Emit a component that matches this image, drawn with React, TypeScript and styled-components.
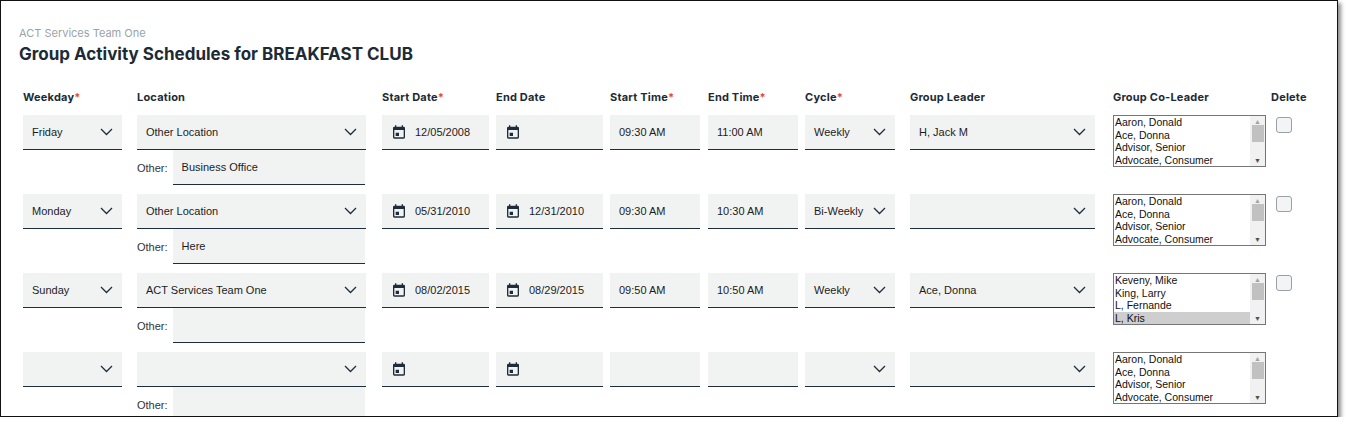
import styled, { createGlobalStyle } from "styled-components";

const Global = createGlobalStyle`
  body { margin: 0; background: #fff; font-family: "Liberation Sans", Arial, sans-serif; }
`;

type Row = {
  weekday: string;
  location: string;
  other: string;
  start: string;
  end: string;
  startTime: string;
  endTime: string;
  cycle: string;
  leader: string;
  coLeaders: string[];
  selected?: number;
  deletable: boolean;
};

const rows: Row[] = [
  { weekday: "Friday", location: "Other Location", other: "Business Office", start: "12/05/2008", end: "", startTime: "09:30 AM", endTime: "11:00 AM", cycle: "Weekly", leader: "H, Jack M", coLeaders: ["Aaron, Donald", "Ace, Donna", "Advisor, Senior", "Advocate, Consumer"], deletable: true },
  { weekday: "Monday", location: "Other Location", other: "Here", start: "05/31/2010", end: "12/31/2010", startTime: "09:30 AM", endTime: "10:30 AM", cycle: "Bi-Weekly", leader: "", coLeaders: ["Aaron, Donald", "Ace, Donna", "Advisor, Senior", "Advocate, Consumer"], deletable: true },
  { weekday: "Sunday", location: "ACT Services Team One", other: "", start: "08/02/2015", end: "08/29/2015", startTime: "09:50 AM", endTime: "10:50 AM", cycle: "Weekly", leader: "Ace, Donna", coLeaders: ["Keveny, Mike", "King, Larry", "L, Fernande", "L, Kris"], selected: 3, deletable: true },
  { weekday: "", location: "", other: "", start: "", end: "", startTime: "", endTime: "", cycle: "", leader: "", coLeaders: ["Aaron, Donald", "Ace, Donna", "Advisor, Senior", "Advocate, Consumer"], deletable: false },
];

const Frame = styled.div`
  width: 1338px;
  height: 417px;
  border: 1px solid #111;
  box-shadow: 3px 3px 4px rgba(0, 0, 0, 0.45);
  overflow: hidden;
  padding: 25px 0 0 18px;
  box-sizing: border-box;
  font-family: Inter, "Liberation Sans", sans-serif;
`;

const Sub = styled.div`
  font-size: 11px;
  color: #9aa3a8;
`;

const Title = styled.h1`
  margin: 4px 0 0;
  font-size: 17px;
  font-weight: 700;
  color: #1c2b36;
`;

const Grid = styled.div`
  display: grid;
  grid-template-columns: 114px 245px 114px 114px 98px 97px 105px 203px 158px auto;
  margin: 26px 0 0 4px;
  row-gap: 9px;
`;

const Head = styled.div`
  font-size: 11px;
  font-weight: 700;
  color: #1c2b36;
  letter-spacing: 0.2px;
  margin-bottom: 2px;
  span { color: #e0473a; }
`;

const Cell = styled.div`
  display: flex;
  flex-direction: column;
`;

const Field = styled.div<{ $w: number }>`
  width: ${({ $w }) => $w}px;
  height: 35px;
  box-sizing: border-box;
  background: #f1f3f3;
  border-bottom: 1px solid #1f2d3a;
  display: flex;
  align-items: center;
  gap: 8px;
  padding: 0 9px;
  font-size: 11px;
  color: #1c1c1c;
  font-family: "Liberation Sans", Arial, sans-serif;
`;

const Value = styled.span`
  flex: 1;
  white-space: nowrap;
`;

const OtherRow = styled.div`
  display: flex;
  align-items: center;
  font-size: 11px;
  color: #333;
  font-family: "Liberation Sans", Arial, sans-serif;
  gap: 5px;
`;

const ListBox = styled.div`
  width: 153px;
  height: 52px;
  box-sizing: border-box;
  border: 1px solid #767676;
  display: flex;
  font-family: "Liberation Sans", Arial, sans-serif;
  font-size: 10.5px;
  color: #111;
`;

const Items = styled.div`
  flex: 1;
`;

const Item = styled.div<{ $sel?: boolean }>`
  height: 12.5px;
  line-height: 12.5px;
  padding-left: 1px;
  background: ${({ $sel }) => ($sel ? "#cecece" : "transparent")};
`;

const Scroll = styled.div`
  width: 15px;
  background: #f1f1f1;
  display: flex;
  flex-direction: column;
  align-items: center;
  justify-content: space-between;
  font-size: 7px;
  color: #a3a3a3;
  padding: 2px 0;
  box-sizing: border-box;
  div { width: 12px; height: 17px; background: #c1c1c1; margin: 0 0 auto; }
  span:last-child { color: #505050; }
`;

const Check = styled.div`
  width: 16px;
  height: 16px;
  margin: 2px 0 0 5px;
  border: 1px solid #9aa0a6;
  border-radius: 3px;
  background: #f3f4f5;
  box-sizing: border-box;
`;

const Chevron = () => (
  <svg width="13" height="8" viewBox="0 0 13 8" fill="none" stroke="#1f2d3a" strokeWidth="1.3">
    <path d="M1 1l5.5 5.5L12 1" />
  </svg>
);

const Cal = () => (
  <svg width="16" height="16" viewBox="0 0 24 24" fill="#1f2d3a">
    <path d="M19 4h-1V2h-2v2H8V2H6v2H5a2 2 0 0 0-2 2v14a2 2 0 0 0 2 2h14a2 2 0 0 0 2-2V6a2 2 0 0 0-2-2zm0 16H5V9h14v11zM7 13h5v5H7z" />
  </svg>
);

function Select({ w, value }: { w: number; value: string }) {
  return (
    <Field $w={w}>
      <Value>{value}</Value>
      <Chevron />
    </Field>
  );
}

function DateField({ value }: { value: string }) {
  return (
    <Field $w={107}>
      <Cal />
      <Value>{value}</Value>
    </Field>
  );
}

const headers: [string, boolean][] = [
  ["Weekday", true], ["Location", false], ["Start Date", true], ["End Date", false],
  ["Start Time", true], ["End Time", true], ["Cycle", true], ["Group Leader", false],
  ["Group Co-Leader", false], ["Delete", false],
];

export default function App() {
  return (
    <Frame>
      <Global />
      <Sub>ACT Services Team One</Sub>
      <Title>Group Activity Schedules for BREAKFAST CLUB</Title>
      <Grid>
        {headers.map(([h, req]) => (
          <Head key={h}>
            {h}
            {req && <span>*</span>}
          </Head>
        ))}
        {rows.map((r, i) => [
          <Cell key={`w${i}`}><Select w={99} value={r.weekday} /></Cell>,
          <Cell key={`l${i}`}>
            <Select w={229} value={r.location} />
            <OtherRow>
              Other:
              <Field $w={192}><Value>{r.other}</Value></Field>
            </OtherRow>
          </Cell>,
          <Cell key={`s${i}`}><DateField value={r.start} /></Cell>,
          <Cell key={`e${i}`}><DateField value={r.end} /></Cell>,
          <Cell key={`st${i}`}><Field $w={90}><Value>{r.startTime}</Value></Field></Cell>,
          <Cell key={`et${i}`}><Field $w={90}><Value>{r.endTime}</Value></Field></Cell>,
          <Cell key={`c${i}`}><Select w={90} value={r.cycle} /></Cell>,
          <Cell key={`g${i}`}><Select w={185} value={r.leader} /></Cell>,
          <Cell key={`co${i}`}>
            <ListBox>
              <Items>
                {r.coLeaders.map((n, j) => (
                  <Item key={n} $sel={r.selected === j}>{n}</Item>
                ))}
              </Items>
              <Scroll>
                <span>▲</span>
                <div />
                <span>▼</span>
              </Scroll>
            </ListBox>
          </Cell>,
          <Cell key={`d${i}`}>{r.deletable && <Check />}</Cell>,
        ])}
      </Grid>
    </Frame>
  );
}
